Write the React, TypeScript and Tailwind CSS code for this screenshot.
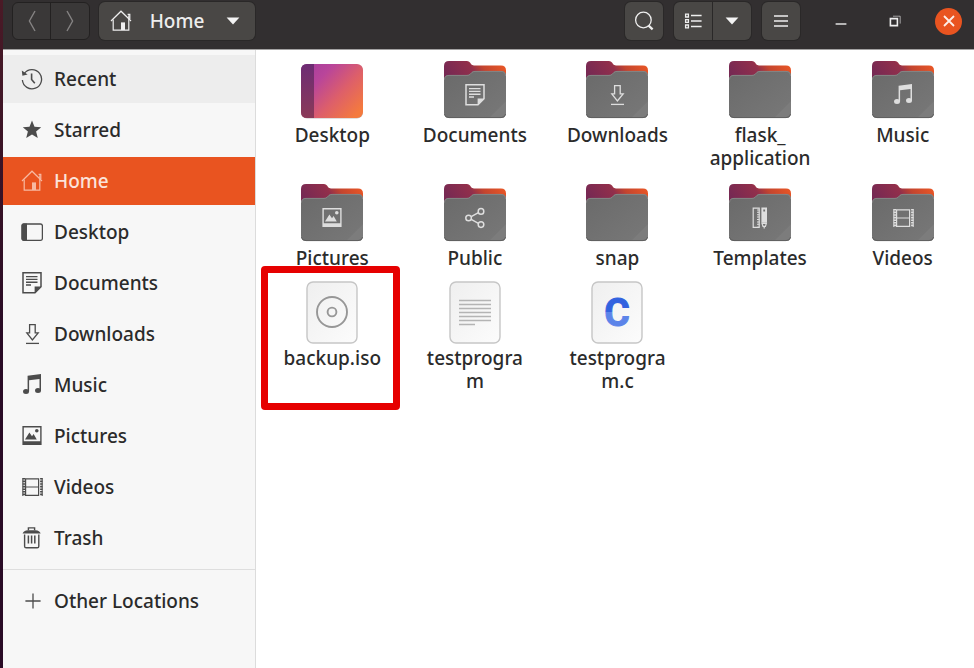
import { ReactNode } from "react";
import clsx from "clsx";

type GlyphName =
    | "recent" | "star" | "home" | "desktop" | "document" | "download" | "music"
    | "picture" | "video" | "trash" | "plus" | "share" | "template";

// All glyphs share one 22x22 box, so they fit both the sidebar and the folder fronts
const glyphs: Record<GlyphName, ReactNode> = {
    recent: (
        <g fill="none" stroke="currentColor" strokeWidth="1.3">
            <path d="M3.2 5.6A9.6 9.6 0 1 1 1.4 12" />
            <path d="M10.6 5.5v6l3.2 3.8" strokeWidth="1.6" />
            <path d="M0.8 2.6l0.6 5.2 5.2-1.2z" fill="currentColor" stroke="none" />
        </g>
    ),
    star: <path fill="currentColor" d="M11 1.6l2.5 6.2 6.7.5-5.1 4.3 1.7 6.5-5.8-3.6-5.8 3.6 1.7-6.5-5.1-4.3 6.7-.5z" />,
    home: (
        <g fill="none" stroke="currentColor" strokeWidth="1.2">
            <path d="M1 11L11 1.2l7 6.8 3 3" />
            <path d="M3.2 9.5v10.6h15.6V5.2M18.8 20.1V9" />
            <path d="M17.6 4.4h2.2V9" />
            <rect x="11" y="12.4" width="4" height="7.6" fill="currentColor" stroke="none" />
        </g>
    ),
    desktop: (
        <g>
            <rect x="1" y="3" width="20.4" height="16.4" rx="2" fill="none" stroke="currentColor" strokeWidth="1.3" />
            <path d="M2.5 2.6H6v17.2H2.5Q.6 19.8.6 18V4.4Q.6 2.6 2.5 2.6z" fill="currentColor" />
        </g>
    ),
    document: (
        <g fill="none" stroke="currentColor">
            <path d="M2 .8h18v14l-6 6H2z" strokeWidth="1.5" />
            <path d="M5 4.6h11.5M5 7.4h11.5M5 10.2h11.5M5 13h5" strokeWidth="1.4" />
            <path d="M13.6 21v-6.4H20z" fill="currentColor" stroke="none" />
        </g>
    ),
    download: (
        <g fill="none" stroke="currentColor" strokeWidth="1.3">
            <path d="M8.6 1.6h5.6v8.2h3L11.4 17 5.8 9.8h2.8z" />
            <path d="M5 20.4h13" />
        </g>
    ),
    music: (
        <g fill="currentColor">
            <path d="M6.6 1.8L20 0v17h-1.5V5L8.1 6.3v11.2H6.6z" />
            <ellipse cx="5" cy="17.6" rx="3" ry="2.5" />
            <ellipse cx="17" cy="16.6" rx="3" ry="2.5" />
        </g>
    ),
    picture: (
        <g fill="currentColor">
            <path fillRule="evenodd" d="M1.4 1h19.2v19H1.4zM2.8 2.4v13.8h16.4V2.4z" />
            <path d="M4 14.4l4.4-7 2.6 3.8 1.6-2.2 3.2 5.4z" />
            <circle cx="15.8" cy="5.8" r="1.8" />
        </g>
    ),
    video: (
        <g fill="none" stroke="currentColor">
            <path d="M4.6 2.8h13v16.6h-13zM4.6 11h13" strokeWidth="1.2" />
            <path d="M2.9 2v18M20.3 2v18" strokeWidth="2.4" strokeDasharray="1.6 1" />
            <path d="M1.8 2v18M21.2 2v18" strokeWidth="1" />
        </g>
    ),
    trash: (
        <g fill="none" stroke="currentColor" strokeWidth="1.4">
            <path d="M1.6 6.4Q2.6 3.6 7 3.2h7.4q4.4.4 5.2 3.2z" fill="currentColor" stroke="none" />
            <path d="M7.4 3.2V.9h6.2v2.3" />
            <path d="M3.6 7.6v11.6q0 1.6 1.6 1.6h11q1.6 0 1.6-1.6V7.6" />
            <path d="M7.4 8.4v8M10.6 8.4v8M13.8 8.4v8" strokeWidth="1.5" />
        </g>
    ),
    plus: <path d="M12 3.4v15.2M4.4 11h15.2" stroke="currentColor" strokeWidth="1.3" />,
    share: (
        <g fill="none" stroke="currentColor" strokeWidth="1.5">
            <circle cx="4.6" cy="11" r="2.8" />
            <circle cx="17" cy="4.4" r="2.8" />
            <circle cx="17" cy="17.6" r="2.8" />
            <path d="M7.2 9.7l7.2-4M7.2 12.3l7.2 4" />
        </g>
    ),
    template: (
        <g fill="none" stroke="currentColor" strokeWidth="1.2">
            <path d="M4.2 1.2h6v19.2h-6z" />
            <path d="M9.2 2.4v17" strokeWidth="2.4" strokeDasharray="1 1.4" />
            <path fillRule="evenodd" d="M12.4.6h5.6v15.2h-5.6zM14.3 2.4v2h1.8v-2z" fill="currentColor" stroke="none" />
            <path d="M13 16.4h4.4l-1 3h-2.4zM15.2 19v2.4" />
        </g>
    ),
};

const Glyph = ({ name, className }: { name: GlyphName; className?: string }) => (
    <svg viewBox="0 0 22 22" className={clsx("h-[22px] w-[22px] shrink-0", className)} aria-hidden="true">
        {glyphs[name]}
    </svg>
);

const FolderIcon = ({ glyph }: { glyph?: GlyphName }) => (
    <svg viewBox="0 0 64 64" className="h-16 w-16" aria-hidden="true">
        <defs>
            <linearGradient id="folderBack" x1="0" y1="0.3" x2="1" y2="0">
                <stop offset="0" stopColor="#772953" />
                <stop offset="0.42" stopColor="#922f4b" />
                <stop offset="0.6" stopColor="#c4452f" />
                <stop offset="1" stopColor="#f05a24" />
            </linearGradient>
            <linearGradient id="folderFront" x1="0" y1="0" x2="1" y2="1">
                <stop offset="0" stopColor="#6a6a6a" />
                <stop offset="1" stopColor="#787878" />
            </linearGradient>
        </defs>
        <path d="M1 8q0-5 5-5h18q2 0 3 1.6l1.4 2Q29 7.4 31 7.4h27q5 0 5 5V30H1z" fill="url(#folderBack)" />
        <path d="M1 21.6Q1 17 6 17h18q2 0 3-1l2-2q1-1 3-1h26q5 0 5 5v37q0 5-5 5H6q-5 0-5-5z" fill="url(#folderFront)" />
        <path d="M1.5 21.6q0-4.2 4.5-4.2h18q2 0 3-1l2-2q1-1 3-1h26q4.5 0 4.5 4.6" fill="none" stroke="#8b8b8b" strokeWidth="0.8" />
        <path d="M63 43v12q0 5-5 5H46z" fill="#808080" opacity="0.6" />
        <path d="M1.4 56q.6 3.6 4.6 3.6h52q4 0 4.6-3.6" fill="none" stroke="#5c5c5c" strokeWidth="0.9" />
        {glyph && <g transform="translate(21 26)" color="#dedede">{glyphs[glyph]}</g>}
    </svg>
);

const DesktopIcon = () => (
    <svg viewBox="0 0 64 64" className="h-16 w-16" aria-hidden="true">
        <defs>
            <linearGradient id="desktopFill" x1="0" y1="0" x2="1" y2="0.8">
                <stop offset="0.1" stopColor="#a93f9c" />
                <stop offset="0.32" stopColor="#b9459a" />
                <stop offset="0.65" stopColor="#dd5f6a" />
                <stop offset="1" stopColor="#f47a3e" />
            </linearGradient>
            <linearGradient id="desktopBar" x1="0" y1="0" x2="0" y2="1">
                <stop offset="0" stopColor="#6d2c74" />
                <stop offset="1" stopColor="#8a3a58" />
            </linearGradient>
        </defs>
        <rect x="1" y="6.4" width="62" height="54" rx="6" fill="#000" opacity="0.25" />
        <rect x="1" y="6" width="62" height="54" rx="6" fill="url(#desktopFill)" />
        <path d="M14 6v54H7q-6 0-6-6V12q0-6 6-6z" fill="url(#desktopBar)" />
    </svg>
);

const FileIcon = ({ children }: { children: ReactNode }) => (
    <svg viewBox="0 0 64 64" className="h-16 w-16" aria-hidden="true">
        <defs>
            <linearGradient id="paper" x1="0" y1="0" x2="1" y2="1">
                <stop offset="0" stopColor="#efefef" />
                <stop offset="1" stopColor="#fcfcfc" />
            </linearGradient>
        </defs>
        <rect x="7" y="1" width="50" height="61" rx="6" fill="url(#paper)" stroke="#c6c6c6" strokeWidth="1.4" />
        {children}
    </svg>
);

const DiscFile = () => (
    <FileIcon>
        <g fill="none" stroke="#979797" strokeWidth="1.9">
            <circle cx="32" cy="31" r="15" />
            <circle cx="32" cy="31" r="4.4" />
        </g>
    </FileIcon>
);

const TextFile = () => (
    <FileIcon>
        <path d="M16 19.5h32M16 23.5h32M16 27.5h32M16 31.5h32M16 35.5h32M16 39.5h32M16 43.5h16" stroke="#b4b4b4" strokeWidth="1.5" />
    </FileIcon>
);

const SourceFile = () => (
    <FileIcon>
        <defs>
            <linearGradient id="letter" gradientUnits="userSpaceOnUse" x1="0" y1="16" x2="0" y2="46">
                <stop offset="0.5" stopColor="#3262df" />
                <stop offset="0.5" stopColor="#5c84e9" />
            </linearGradient>
        </defs>
        <text x="32" y="45" textAnchor="middle" fill="url(#letter)" stroke="url(#letter)" strokeWidth="1" className="font-[Roboto,sans-serif] text-[39px] font-bold">
            C
        </text>
    </FileIcon>
);

interface Place {
    label: string;
    glyph: GlyphName;
}

const places: Place[] = [
    { label: "Recent", glyph: "recent" },
    { label: "Starred", glyph: "star" },
    { label: "Home", glyph: "home" },
    { label: "Desktop", glyph: "desktop" },
    { label: "Documents", glyph: "document" },
    { label: "Downloads", glyph: "download" },
    { label: "Music", glyph: "music" },
    { label: "Pictures", glyph: "picture" },
    { label: "Videos", glyph: "video" },
    { label: "Trash", glyph: "trash" },
];

interface Entry {
    name: string;
    label?: ReactNode;
    icon: ReactNode;
    marked?: boolean;
}

const entries: Entry[] = [
    { name: "Desktop", icon: <DesktopIcon /> },
    { name: "Documents", icon: <FolderIcon glyph="document" /> },
    { name: "Downloads", icon: <FolderIcon glyph="download" /> },
    { name: "flask_application", label: <>flask_<wbr />application</>, icon: <FolderIcon /> },
    { name: "Music", icon: <FolderIcon glyph="music" /> },
    { name: "Pictures", icon: <FolderIcon glyph="picture" /> },
    { name: "Public", icon: <FolderIcon glyph="share" /> },
    { name: "snap", icon: <FolderIcon /> },
    { name: "Templates", icon: <FolderIcon glyph="template" /> },
    { name: "Videos", icon: <FolderIcon glyph="video" /> },
    { name: "backup.iso", icon: <DiscFile />, marked: true },
    { name: "testprogram", icon: <TextFile /> },
    { name: "testprogram.c", icon: <SourceFile /> },
];

const PlaceButton = ({ label, glyph, active, hovered }: Place & { active?: boolean; hovered?: boolean }) => (
    <button
        className={clsx(
            "flex h-12 w-full items-center gap-[11px] pl-[18px] text-left",
            active ? "bg-[#e95420] text-[#fbe3da]" : "text-[#2b2b2b]",
            hovered && "bg-[#ededed]"
        )}
    >
        <Glyph name={glyph} className={active ? "text-[#f7b9a2]" : "text-[#4c4c4c]"} />
        <span>{label}</span>
    </button>
);

const Caret = () => (
    <svg viewBox="0 0 14 8" className="h-2 w-[14px]" aria-hidden="true">
        <path d="M.6.6h12.8L7 7.4z" fill="#f4f4f4" />
    </svg>
);

const toolButton = "flex h-[38px] items-center justify-center bg-[#494745] shadow-[0_0_0_1px_#2a2828]";

const HeaderBar = () => (
    <header className="flex h-[50px] items-start border-b border-[#a3a2a2] bg-[#322f30] pt-[2px] pr-3 pl-[9px] text-[#eeeeee]">
        <div className="flex rounded-md border border-[#232121] bg-[#3a3838]">
            <button aria-label="Back" className="flex h-9 w-[38px] items-center justify-center border-r border-[#232121]">
                <svg viewBox="0 0 8 22" className="h-[22px] w-2" fill="none" stroke="#858383" strokeWidth="1.4" aria-hidden="true">
                    <path d="M7 1L1.4 11 7 21" />
                </svg>
            </button>
            <button aria-label="Forward" className="flex h-9 w-[38px] items-center justify-center">
                <svg viewBox="0 0 8 22" className="h-[22px] w-2" fill="none" stroke="#858383" strokeWidth="1.4" aria-hidden="true">
                    <path d="M1 1l5.6 10L1 21" />
                </svg>
            </button>
        </div>
        <button className={clsx(toolButton, "ml-[9px] w-[156px] rounded-md pr-1")}>
            <Glyph name="home" />
            <span className="mr-[22px] ml-[18px]">Home</span>
            <Caret />
        </button>

        <div className="ml-auto flex gap-[11px]">
            <button aria-label="Search" className={clsx(toolButton, "w-[38px] rounded-md")}>
                <svg viewBox="0 0 20 20" className="h-5 w-5" fill="none" stroke="currentColor" aria-hidden="true">
                    <circle cx="9.4" cy="9" r="7.8" strokeWidth="1.3" />
                    <path d="M14.6 14.6l4 3.8" strokeWidth="2.2" />
                </svg>
            </button>
            <div className="flex gap-px">
                <button aria-label="List view" className={clsx(toolButton, "w-[38px] rounded-l-md")}>
                    <svg viewBox="0 0 18 16" className="h-4 w-[18px]" fill="none" stroke="currentColor" aria-hidden="true">
                        <path d="M1.6 1.2h2.8V4H1.6zM1.6 6.6h2.8v2.8H1.6zM1.6 12h2.8v2.8H1.6z" strokeWidth="1.3" />
                        <path d="M7 2.6h10.6M7 8h10.6M7 13.4h10.6" strokeWidth="1.5" />
                    </svg>
                </button>
                <button aria-label="View options" className={clsx(toolButton, "w-[38px] rounded-r-md")}>
                    <Caret />
                </button>
            </div>
            <button aria-label="Menu" className={clsx(toolButton, "w-[38px] rounded-md")}>
                <svg viewBox="0 0 14 12" className="h-3 w-[14px]" stroke="currentColor" strokeWidth="1.5" aria-hidden="true">
                    <path d="M0 1h14M0 6h14M0 11h14" />
                </svg>
            </button>
        </div>

        <div className="ml-[27px] flex h-[38px] items-center gap-[27px]">
            <button aria-label="Minimize" className="flex h-[27px] w-[27px] items-center justify-center">
                <svg viewBox="0 0 12 12" className="h-3 w-3" stroke="currentColor" strokeWidth="1.4" aria-hidden="true">
                    <path d="M.6 9h10.8" />
                </svg>
            </button>
            <button aria-label="Restore" className="flex h-[27px] w-[27px] items-center justify-center">
                <svg viewBox="0 0 12 12" className="h-3 w-3" fill="none" stroke="currentColor" aria-hidden="true">
                    <path d="M1.4 3.6h7v7h-7z" strokeWidth="1.6" />
                    <path d="M4 1.2h7.2v7.4" strokeWidth="1" opacity="0.6" />
                </svg>
            </button>
            <button aria-label="Close" className="flex h-[27px] w-[27px] items-center justify-center rounded-full bg-[#e95420]">
                <svg viewBox="0 0 12 12" className="h-3 w-3" stroke="#fdeee8" strokeWidth="1.8" aria-hidden="true">
                    <path d="M1 1l10 10M11 1L1 11" />
                </svg>
            </button>
        </div>
    </header>
);

const Sidebar = () => (
    <nav className="w-[253px] shrink-0 border-r border-[#dcdcdc] bg-[#f7f7f7] pt-[5px]">
        <div className="flex flex-col gap-[3px]">
            {places.map((place) => (
                <PlaceButton key={place.label} {...place} active={place.label === "Home"} hovered={place.label === "Recent"} />
            ))}
        </div>
        <hr className="my-[7px] border-t border-[#dedede]" />
        <PlaceButton label="Other Locations" glyph="plus" />
    </nav>
);

const FileGrid = () => (
    <main className="flex-1 bg-white pt-2 pl-[5px]">
        <ul className="grid grid-cols-5 gap-y-[11px]">
            {entries.map((entry) => (
                <li key={entry.name} className="relative flex justify-center">
                    <button className="flex w-[108px] flex-col items-center gap-[2px] text-[#2b2b2b]">
                        {entry.icon}
                        <span className="max-w-full break-words">{entry.label ?? entry.name}</span>
                    </button>
                    {entry.marked && (
                        <div className="pointer-events-none absolute -top-[15px] left-0 h-36 w-[139px] rounded border-[7px] border-[#e60000]" />
                    )}
                </li>
            ))}
        </ul>
    </main>
);

const App = () => {
    return (
        <div className="flex min-h-screen bg-white font-['Noto_Sans',sans-serif] text-[19px] leading-[23px] font-medium">
            <div className="w-[3px] shrink-0 bg-linear-to-b from-[#4a1a26] to-[#2a0c26] to-50%" />
            <div className="flex flex-1 flex-col">
                <HeaderBar />
                <div className="flex flex-1">
                    <Sidebar />
                    <FileGrid />
                </div>
            </div>
        </div>
    );
};

export default App;
